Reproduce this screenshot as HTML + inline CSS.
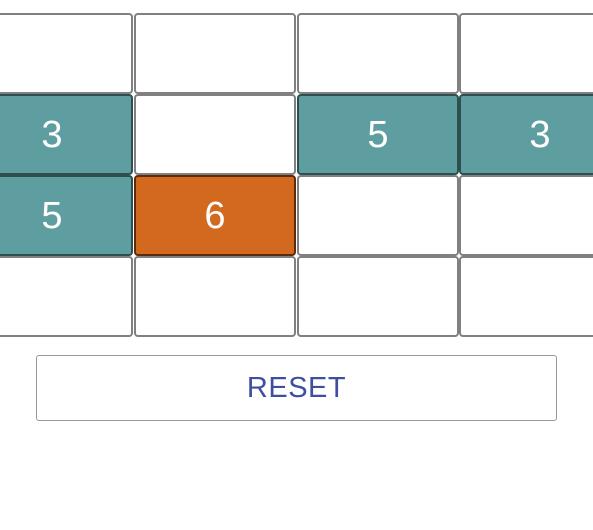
<!DOCTYPE html>
<html><head><style>
html,body{margin:0;padding:0;background:#fff;width:593px;height:530px;overflow:hidden;position:relative;font-family:"Liberation Sans",sans-serif}
.c{position:absolute;box-sizing:border-box;width:162px;height:81px;border:2px solid #808080;border-radius:4px;background:#fff;color:#fff;font-size:38px;display:flex;align-items:center;justify-content:center;padding-top:2px}
.t{background:#5f9ea0;border-color:#2f4f4f}
.o{background:#d2691e;border-color:#5c2a0c}
.btn{position:absolute;left:36px;top:355px;width:521px;height:66px;box-sizing:border-box;border:1px solid #999;border-radius:3px;color:#3f4fa0;font-size:29px;display:flex;align-items:center;justify-content:center;letter-spacing:0.5px}
</style></head><body>
<div class="c" style="left:-29px;top:13px"></div>
<div class="c" style="left:134px;top:13px"></div>
<div class="c" style="left:297px;top:13px"></div>
<div class="c" style="left:459px;top:13px"></div>

<div class="c t" style="left:-29px;top:94px">3</div>
<div class="c" style="left:134px;top:94px"></div>
<div class="c t" style="left:297px;top:94px">5</div>
<div class="c t" style="left:459px;top:94px">3</div>

<div class="c t" style="left:-29px;top:175px">5</div>
<div class="c o" style="left:134px;top:175px">6</div>
<div class="c" style="left:297px;top:175px"></div>
<div class="c" style="left:459px;top:175px"></div>

<div class="c" style="left:-29px;top:256px"></div>
<div class="c" style="left:134px;top:256px"></div>
<div class="c" style="left:297px;top:256px"></div>
<div class="c" style="left:459px;top:256px"></div>

<div class="btn">RESET</div>
</body></html>
